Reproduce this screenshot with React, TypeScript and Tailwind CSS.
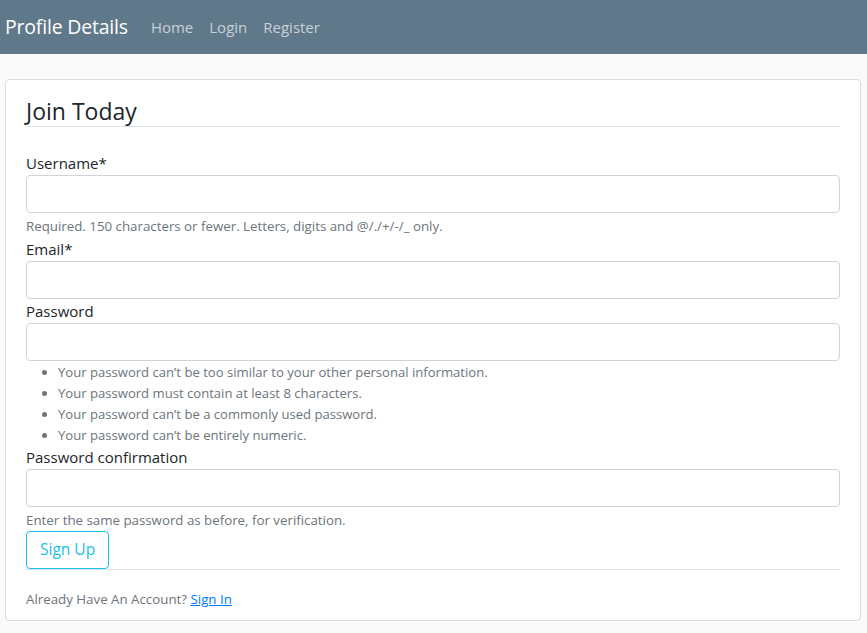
const FONT = "font-['Open_Sans','Noto_Sans',sans-serif]";

const PW_RULES = [
  "Your password can’t be too similar to your other personal information.",
  "Your password must contain at least 8 characters.",
  "Your password can’t be a commonly used password.",
  "Your password can’t be entirely numeric.",
];

function Field({ label, type = "text" }: { label: string; type?: string }) {
  return (
    <>
      <label className="block text-[15px] leading-6 text-[#212529]">{label}</label>
      <input
        type={type}
        className="block w-full h-[38px] bg-white border border-[#ced4da] rounded-[4px] px-3 text-[15px] focus:outline-none"
      />
    </>
  );
}

export default function App() {
  return (
    <div className={`min-h-[633px] bg-[#fafafa] ${FONT}`}>
      {/* Navbar */}
      <nav className="h-[54px] bg-[#5f788a] flex items-center pl-[5px]">
        <span className="text-[19.5px] text-white mr-[15px] tracking-[-0.2px]">Profile Details</span>
        <div className="flex text-[15px] text-[#c9d1d7]">
          <a className="px-[8px]">Home</a>
          <a className="px-[8px]">Login</a>
          <a className="px-[8px]">Register</a>
        </div>
      </nav>

      {/* Card */}
      <div className="mt-[25px] ml-[5px] w-[856px] bg-white border border-[#dcdcdc] rounded-[4px] px-5 pt-4 pb-[10px]">
        <div className="text-[23px] leading-[30px] text-[#212529] border-b border-[#dee2e6] mb-6">
          Join Today
        </div>

        <Field label="Username*" />
        <p className="mt-1 text-[13.3px] leading-[19.5px] text-[#6c757d]">
          Required. 150 characters or fewer. Letters, digits and @/./+/-/_ only.
        </p>

        <Field label="Email*" type="email" />
        <Field label="Password" type="password" />
        <ul className="list-disc pl-[32px] pt-[1px] -mb-[1px] text-[13.1px] leading-[21px] text-[#6c757d] marker:text-[#6c757d]">
          {PW_RULES.map((r) => (
            <li key={r}>{r}</li>
          ))}
        </ul>

        <Field label="Password confirmation" type="password" />
        <p className="mt-1 text-[13.3px] leading-[19.5px] text-[#6c757d]">
          Enter the same password as before, for verification.
        </p>

        <button className="mt-[1px] h-[38px] px-[13px] border border-[#17c1e8] rounded-[4px] text-[15.5px] text-[#17c1e8]">
          Sign Up
        </button>

        <div className="border-t border-[#dee2e6] pt-4">
          <small className="text-[13.3px] leading-[19.5px] text-[#6c757d]">
            Already Have An Account?{" "}
            <a href="#" className="text-[#007bff] underline">
              Sign In
            </a>
          </small>
        </div>
      </div>
    </div>
  );
}
